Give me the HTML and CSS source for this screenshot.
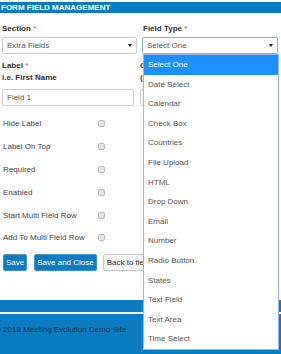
FILE: index.html
```html
<!DOCTYPE html>
<html lang="en">
<head>
<meta charset="utf-8">
<title>Form Field Management</title>
<link rel="stylesheet" href="styles.css">
</head>
<body>
<header class="title-bar">FORM FIELD MANAGEMENT</header>
<main class="form">
  <div class="row row-top">
    <div class="field">
      <div class="label">Section <span class="req">*</span></div>
      <div class="select"><span>Extra Fields</span><span class="caret"></span></div>
    </div>
    <div class="field">
      <div class="label">Field Type <span class="req">*</span></div>
      <div class="select focused"><span>Select One</span><span class="caret"></span></div>
    </div>
  </div>
  <div class="row row-label">
    <div class="field">
      <div class="label tall">Label <span class="req">*</span></div>
      <div class="label tall">i.e. First Name</div>
      <div class="input">Field 1</div>
    </div>
    <div class="field">
      <div class="label tall">Caption</div>
      <div class="label tall">(Optional)</div>
      <div class="input"></div>
    </div>
  </div>
  <div class="checks">
    <div class="check-row"><span>Hide Label</span><span class="box"></span></div>
    <div class="check-row"><span>Label On Top</span><span class="box"></span></div>
    <div class="check-row"><span>Required</span><span class="box"></span></div>
    <div class="check-row"><span>Enabled</span><span class="box"></span></div>
    <div class="check-row"><span>Start Multi Field Row</span><span class="box"></span></div>
    <div class="check-row"><span>Add To Multi Field Row</span><span class="box"></span></div>
  </div>
  <div class="buttons">
    <span class="btn btn-primary">Save</span>
    <span class="btn btn-primary btn-wide">Save and Close</span>
    <span class="btn btn-default">Back to field list</span>
  </div>
</main>
<footer class="footer">
  <div class="footer-top"></div>
  <div class="footer-main">© 2018 Meeting Evolution Demo Site</div>
</footer>
<ul class="dropdown">
  <li class="selected">Select One</li>
  <li>Date Select</li>
  <li>Calendar</li>
  <li>Check Box</li>
  <li>Countries</li>
  <li>File Upload</li>
  <li>HTML</li>
  <li>Drop Down</li>
  <li>Email</li>
  <li>Number</li>
  <li>Radio Button</li>
  <li>States</li>
  <li>Text Field</li>
  <li>Text Area</li>
  <li>Time Select</li>
</ul>
</body>
</html>
```
FILE: styles.css
```css
html, body {
  margin: 0;
  padding: 0;
  background: #fff;
}
body {
  font-family: "Liberation Sans", Arial, sans-serif;
  font-size: 8px;
  color: #444;
  overflow: hidden;
  position: relative;
}
.title-bar {
  margin-top: 2px;
  height: 11px;
  line-height: 12px;
  padding-left: 1px;
  background: #0b7bc2;
  color: #fff;
  font-weight: bold;
}
.form {
  padding: 0 0 0 2px;
}
.row {
  display: grid;
}
.row-top {
  grid-template-columns: 135px 135px;
  column-gap: 6px;
  margin-top: 11px;
}
.row-label {
  grid-template-columns: 132px 132px;
  column-gap: 6px;
  margin-top: 6px;
}
.label {
  font-weight: bold;
  color: #333;
  line-height: 10px;
  white-space: nowrap;
}
.label.tall {
  line-height: 12px;
}
.req {
  color: #e23c3c;
  font-weight: normal;
}
.select {
  margin-top: 3px;
  height: 15px;
  border: 1px solid #ccc;
  border-radius: 2px;
  display: flex;
  align-items: center;
  justify-content: space-between;
  padding: 0 4px 0 4px;
  color: #555;
}
.select.focused {
  border-color: #7fb0e6;
  margin-left: -1px;
}
.caret {
  width: 0;
  height: 0;
  border-left: 2px solid transparent;
  border-right: 2px solid transparent;
  border-top: 3px solid #222;
}
.input {
  margin-top: 5px;
  height: 15px;
  line-height: 15px;
  border: 1px solid #ccc;
  border-radius: 2px;
  padding-left: 4px;
  color: #555;
}
.checks {
  margin-top: 6.6px;
}
.check-row {
  display: grid;
  grid-template-columns: 95px 7px;
  align-items: center;
  height: 22.8px;
  padding-left: 1px;
  color: #444;
  white-space: nowrap;
}
.box {
  width: 5px;
  height: 5px;
  border: 1px solid #b9b9b9;
  background: #e6e6e6;
  border-radius: 2px;
}
.buttons {
  margin-top: 4.6px;
  display: flex;
  gap: 6px;
  padding-left: 1px;
  white-space: nowrap;
}
.btn {
  height: 15px;
  line-height: 15px;
  border: 1px solid;
  border-radius: 2px;
  padding: 0 2px;
}
.btn-primary {
  background: #0b7bc2;
  border-color: #3d95cf;
  color: #fff;
}
.btn-wide {
  margin-left: 1px;
}
.btn-default {
  background: #f4f4f4;
  border-color: #c8c8c8;
  color: #333;
  padding: 0 3px;
}
.footer {
  margin-top: 29px;
}
.footer-top {
  height: 12px;
  background: #0b7bc2;
  border-bottom: 2px solid #fff;
}
.footer-main {
  height: 40px;
  background: #0b7bc2;
  color: #1d3650;
  line-height: 12px;
  padding-top: 10px;
  margin-left: -5px;
  box-sizing: border-box;
  white-space: nowrap;
}
.dropdown {
  position: absolute;
  left: 143px;
  top: 54px;
  width: 134px;
  margin: 0;
  padding: 0;
  list-style: none;
  background: #fff;
  border: 1px solid #9bb6dc;
  z-index: 2;
}
.dropdown li {
  height: 19.6px;
  line-height: 19.6px;
  padding-left: 4px;
  color: #555;
}
.dropdown li.selected {
  background: #1e8fff;
  color: #fff;
}
```
